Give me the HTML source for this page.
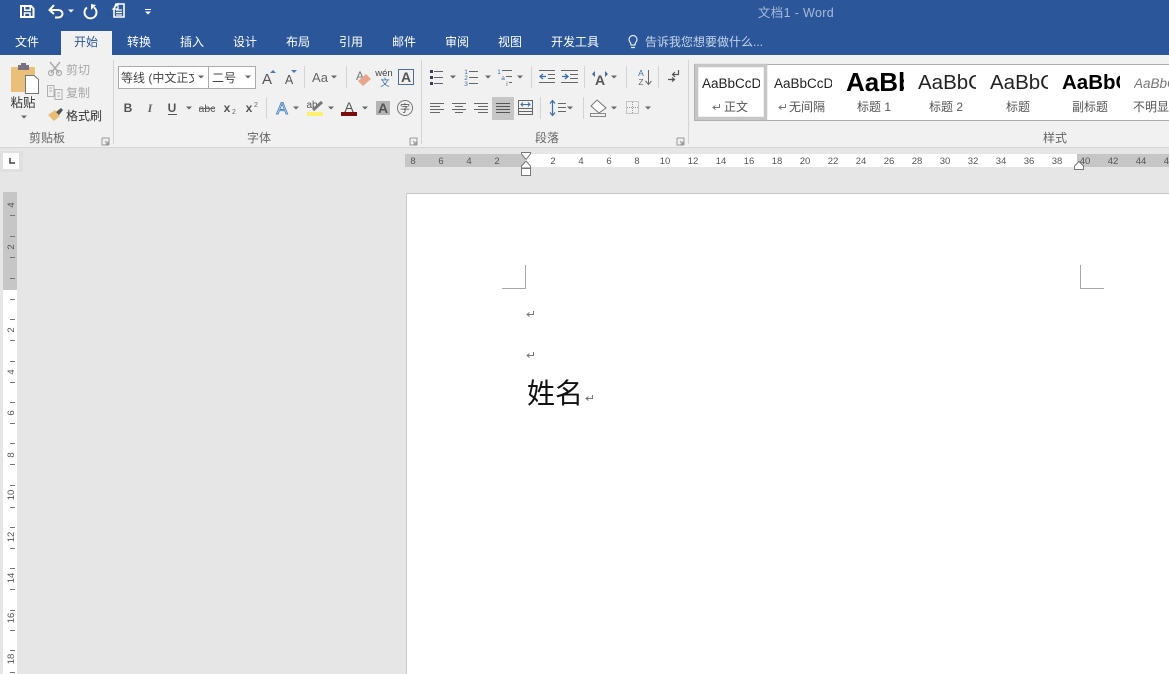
<!DOCTYPE html>
<html lang="zh"><head><meta charset="utf-8"><title>文档1 - Word</title>
<style>
html,body{margin:0;padding:0;width:1169px;height:674px;overflow:hidden;background:#e6e6e6}
svg{display:block;position:absolute;left:0;top:0}
text{font-family:"Liberation Sans","Noto Sans CJK SC",sans-serif}
.t{font-size:12px;fill:#fff;text-anchor:middle}
.l{font-size:12px;fill:#444}
.g{font-size:12px;fill:#666;text-anchor:middle}
.s{font-size:12px;fill:#555;text-anchor:middle}
.r{font-size:9.500px;fill:#555;text-anchor:middle}
.i{fill:none;stroke:#666;stroke-width:1}
</style></head><body>
<svg width="1169" height="674" viewBox="0 0 1169 674" xmlns="http://www.w3.org/2000/svg">
<defs>
<polygon id="a" points="-3,-1.500 3,-1.500 0,1.500" fill="#666"/>
<polygon id="w" points="-3,-1.500 3,-1.500 0,1.500" fill="#fff"/>
<path id="lau" d="M0,0H7V7M0,0V7H7M3,3L6,6M6,3.500V6H3.500" fill="none" stroke="#999" stroke-width="1"/>
<path id="ret" d="M7.500,0V3.500H1.500M3.500,1.500L1,3.500L3.500,5.500" fill="none" stroke="#777" stroke-width="1"/>
<clipPath id="c1"><rect x="120" y="66" width="74" height="22"/></clipPath>
</defs>

<!-- Chrome -->
<rect width="1169" height="55" fill="#2b579a"/>
<rect x="0" y="55" width="1169" height="93" fill="#f1f1f1"/>
<rect x="0" y="147" width="1169" height="1" fill="#d6d6d6"/>
<rect x="0" y="148" width="1169" height="526" fill="#e6e6e6"/>
<rect x="61" y="31" width="51" height="25" fill="#f1f1f1"/>

<!-- QAT -->
<path d="M21,6H31L33.500,8.500V17H21Z" fill="none" stroke="#fff" stroke-width="2"/>
<rect x="24" y="5" width="7" height="1.500" fill="#fff"/>
<rect x="24" y="9.500" width="7" height="1.500" fill="#fff"/>
<rect x="24" y="5" width="1.500" height="5" fill="#fff"/><rect x="29.500" y="5" width="1.500" height="5" fill="#fff"/>
<path d="M24.500,17V13H30V17" fill="none" stroke="#fff" stroke-width="1.500"/>
<path d="M50,10H58C64,10 64,17.500 58,17.500H55" fill="none" stroke="#fff" stroke-width="2"/>
<path d="M54,5L49.500,10L54,14" fill="none" stroke="#fff" stroke-width="2"/>
<use href="#w" x="71" y="11"/>
<path d="M87,7.500A6,6 0 1 0 94,7.500" fill="none" stroke="#fff" stroke-width="2"/>
<path d="M91,4V10L96,5Z" fill="#fff"/>
<path d="M116,4H124V17H114V9Z" fill="none" stroke="#fff" stroke-width="1.600"/>
<path d="M113,9L118,4L118,9ZM116,10H122M116,12.500H122M116,15H122" fill="none" stroke="#fff" stroke-width="1.200"/>
<rect x="145" y="9" width="6" height="1" fill="#fff"/><use href="#w" x="148" y="13"/>

<!-- Title & tabs -->
<text x="796" y="17" text-anchor="middle" font-size="12.500" fill="#a8bbd8" style="letter-spacing:.35px">文档1 - Word</text>
<text class="t" x="27" y="46">文件</text>
<text class="t" x="86" y="46" style="fill:#2b579a">开始</text>
<text class="t" x="139" y="46">转换</text>
<text class="t" x="192" y="46">插入</text>
<text class="t" x="245" y="46">设计</text>
<text class="t" x="298" y="46">布局</text>
<text class="t" x="351" y="46">引用</text>
<text class="t" x="404" y="46">邮件</text>
<text class="t" x="457" y="46">审阅</text>
<text class="t" x="510" y="46">视图</text>
<text class="t" x="575" y="46">开发工具</text>
<path d="M631,45C631,42 629,42 629,39.500A4,4 0 0 1 637,39.500C637,42 635,42 635,45ZM631,47.500H635" fill="none" stroke="#dfe8f4" stroke-width="1.200"/>
<text x="645" y="46" font-size="12" fill="#c6d3e7">告诉我您想要做什么...</text>

<!-- Clipboard -->
<rect x="11" y="67" width="24" height="25" rx="1" fill="#e9bf79"/>
<rect x="18" y="65" width="11" height="5" fill="#7c7080"/><rect x="21" y="63" width="5" height="3" fill="#7c7080"/>
<path d="M25.500,75.500H34L38.500,79.500V93.500H25.500Z" fill="#fff" stroke="#777"/>
<text x="23" y="107" text-anchor="middle" font-size="12.500" fill="#333">粘贴</text>
<use href="#a" x="24" y="117"/>
<path d="M50,62L59,73M60,62L51,73" stroke="#aaa" stroke-width="1.500" fill="none"/>
<circle cx="51" cy="73" r="2.500" fill="none" stroke="#aaa" stroke-width="1.200"/><circle cx="59" cy="73" r="2.500" fill="none" stroke="#aaa" stroke-width="1.200"/>
<text x="66" y="74" font-size="12" fill="#a8a8a8">剪切</text>
<path d="M47.500,85.500H54V96.500H47.500ZM55,89.500H62V99.500H55ZM49,88H52M49,91H52M57,93H60M57,96H60" fill="none" stroke="#b0b0b0"/>
<text x="66" y="97" font-size="12" fill="#a8a8a8">复制</text>
<path d="M48,115L55,110L60,116L54,121Z" fill="#e8bd75"/><path d="M56,112L61,108L63,110L59,115Z" fill="#555"/>
<text x="66" y="120" font-size="12" fill="#333">格式刷</text>
<text class="g" x="47" y="142">剪贴板</text>
<use href="#lau" x="102" y="138"/>
<rect x="113" y="60" width="1" height="84" fill="#d4d4d4"/>

<!-- Font group -->
<rect x="118.500" y="66.500" width="90" height="22" fill="#fff" stroke="#ababab"/>
<rect x="208.500" y="66.500" width="47" height="22" fill="#fff" stroke="#ababab"/>
<text x="121" y="82" font-size="12" fill="#444" clip-path="url(#c1)">等线 (中文正文)</text>
<use href="#a" x="201" y="77"/>
<text x="212" y="82" font-size="12" fill="#444">二号</text>
<use href="#a" x="248" y="77"/>
<text x="267" y="84" text-anchor="middle" font-size="15" fill="#555">A</text><polygon points="270,73 273,70 276,73" fill="#4a7ab0"/>
<text x="289" y="84" text-anchor="middle" font-size="12.500" fill="#555">A</text><polygon points="291,70 297,70 294,73" fill="#4a7ab0"/>
<rect x="304" y="66" width="1" height="22" fill="#d4d4d4"/>
<text x="320" y="82" text-anchor="middle" font-size="13" fill="#666">Aa</text><use href="#a" x="334" y="77"/>
<rect x="346" y="66" width="1" height="22" fill="#d4d4d4"/>
<text x="360" y="80" text-anchor="middle" font-size="12" fill="#777">A</text>
<path d="M358,81L366,74L371,79L363,86Z" fill="#e8a58c"/>
<text x="384" y="76" text-anchor="middle" font-size="9.500" fill="#444">wén</text>
<text x="385" y="86" text-anchor="middle" font-size="9.500" fill="#3a6ea5">文</text>
<rect x="398.500" y="69.500" width="15" height="15" fill="none" stroke="#4d6d91"/>
<text x="406" y="82" text-anchor="middle" font-size="14" font-weight="bold" fill="#555">A</text>

<text x="128" y="112" text-anchor="middle" font-size="12" font-weight="bold" fill="#555">B</text>
<text x="150" y="112" text-anchor="middle" font-size="12" font-style="italic" font-weight="bold" fill="#666" style="font-family:'Liberation Serif',serif">I</text>
<text x="172" y="112" text-anchor="middle" font-size="12" font-weight="bold" fill="#555">U</text><rect x="168" y="114" width="9" height="1" fill="#555"/>
<use href="#a" x="189" y="108"/>
<text x="207" y="112" text-anchor="middle" font-size="10.500" fill="#555">abc</text><rect x="199" y="108" width="16" height="1" fill="#666"/>
<text x="227" y="112" text-anchor="middle" font-size="12" font-weight="bold" fill="#555">x</text><text x="234" y="114" text-anchor="middle" font-size="7" fill="#666">2</text>
<text x="249" y="112" text-anchor="middle" font-size="12" font-weight="bold" fill="#555">x</text><text x="256" y="107" text-anchor="middle" font-size="7" fill="#666">2</text>
<rect x="266" y="97" width="1" height="22" fill="#d4d4d4"/>
<text x="282" y="114" text-anchor="middle" font-size="17" fill="#dcebf8" stroke="#4f86c0" stroke-width=".9">A</text><use href="#a" x="296" y="108"/>
<text x="312" y="108" text-anchor="middle" font-size="10" fill="#555">ab</text>
<path d="M313,110L322,102" stroke="#777" stroke-width="3"/>
<rect x="307" y="112" width="16" height="4" fill="#fcef6e"/><use href="#a" x="331" y="108"/>
<text x="349" y="112" text-anchor="middle" font-size="14" fill="#555">A</text>
<rect x="341" y="112" width="16" height="4" fill="#7a0c0c"/><use href="#a" x="365" y="108"/>
<rect x="376" y="101" width="14" height="14" fill="#b4b4b4"/>
<text x="383" y="113" text-anchor="middle" font-size="14" font-weight="bold" fill="#555">A</text>
<circle cx="405" cy="108" r="7.500" fill="none" stroke="#777"/>
<text x="405" y="112" text-anchor="middle" font-size="10" fill="#444">字</text>
<text class="g" x="259" y="142">字体</text>
<use href="#lau" x="410" y="138"/>
<rect x="421" y="60" width="1" height="84" fill="#d4d4d4"/>

<!-- Paragraph row 1 -->
<path d="M434,71.500H443M434,77.500H443M434,83.500H443" class="i"/>
<path d="M430,70h3v3h-3zM430,76h3v3h-3zM430,82h3v3h-3z" fill="#3a3a5a"/>
<use href="#a" x="453" y="77"/>
<path d="M469,71.500H478M469,77.500H478M469,83.500H478" class="i"/>
<text x="466" y="74" text-anchor="middle" font-size="6.500" fill="#3f6ea3">1</text><text x="466" y="80" text-anchor="middle" font-size="6.500" fill="#3f6ea3">2</text><text x="466" y="86" text-anchor="middle" font-size="6.500" fill="#3f6ea3">3</text>
<use href="#a" x="488" y="77"/>
<path d="M502,70.500H512M506,76.500H512M509,82.500H512" class="i"/>
<text x="499" y="74" text-anchor="middle" font-size="6.500" fill="#3f6ea3">1</text><text x="503" y="80" text-anchor="middle" font-size="6.500" fill="#3f6ea3">a</text><text x="507" y="86" text-anchor="middle" font-size="6.500" fill="#666">i</text>
<use href="#a" x="520" y="77"/>
<rect x="531" y="66" width="1" height="22" fill="#d4d4d4"/>
<path d="M539,70.500H555M548,74.500H555M548,78.500H555M539,82.500H555" class="i"/><path d="M546,76.500H540M543,74L540,76.500L543,79" stroke="#3f6ea3" stroke-width="1.300" fill="none"/>
<path d="M561,70.500H578M570,74.500H578M570,78.500H578M561,82.500H578" class="i"/><path d="M562,76.500H568M565,74L568,76.500L565,79" stroke="#3f6ea3" stroke-width="1.300" fill="none"/>
<rect x="584" y="66" width="1" height="22" fill="#d4d4d4"/>
<text x="600" y="85" text-anchor="middle" font-size="14" font-weight="bold" fill="#555">A</text>
<path d="M592,74L595,71V77ZM608,74L605,71V77Z" fill="#3f6ea3"/>
<use href="#a" x="614" y="77"/>
<rect x="626" y="66" width="1" height="22" fill="#d4d4d4"/>
<text x="641" y="76" text-anchor="middle" font-size="8.500" fill="#3f6ea3">A</text><text x="641" y="85" text-anchor="middle" font-size="8.500" fill="#666">Z</text>
<path d="M648.500,70V84M645.500,81L648.500,84.500L651.500,81" class="i"/>
<rect x="658" y="66" width="1" height="22" fill="#d4d4d4"/>
<path d="M678.500,70V74.500H673M675,72L672.500,74.500L675,77" fill="none" stroke="#555" stroke-width="1.200"/>
<path d="M668,79.500H674M672,77.500L674.500,79.500L672,81.500" fill="none" stroke="#555" stroke-width="1.200"/>

<!-- Paragraph row 2 -->
<path d="M430,103.500H444M430,106.500H440M430,109.500H444M430,112.500H440" class="i"/>
<path d="M452,103.500H466M455,106.500H463M452,109.500H466M455,112.500H463" class="i"/>
<path d="M474,103.500H488M478,106.500H488M474,109.500H488M478,112.500H488" class="i"/>
<rect x="492" y="97" width="22" height="23" fill="#c6c6c6"/>
<path d="M496,103.500H510M496,106.500H510M496,109.500H510M496,112.500H510" stroke="#555" fill="none"/>
<path d="M518,100.500H533M518,111.500H533M518,114.500H533M518,108.500H533" stroke="#666" fill="none"/>
<path d="M518.500,100V115M532.500,100V115" stroke="#666" fill="none"/>
<path d="M521,104.500H530M523,102.500L521,104.500L523,106.500M528,102.500L530,104.500L528,106.500" stroke="#3f6ea3" fill="none"/>
<rect x="540" y="97" width="1" height="22" fill="#d4d4d4"/>
<path d="M552.500,101V115M550,103.500L552.500,100.500L555,103.500M550,112.500L552.500,115.500L555,112.500" stroke="#3f6ea3" stroke-width="1.200" fill="none"/>
<path d="M558,103.500H566M558,107.500H566M558,111.500H566" class="i"/>
<use href="#a" x="570" y="108"/>
<rect x="583" y="97" width="1" height="22" fill="#d4d4d4"/>
<path d="M597,100L606,108L599,113L591,106Z" fill="#fff" stroke="#777"/>
<rect x="590.500" y="113.500" width="15" height="3" fill="#f1f1f1" stroke="#888"/>
<use href="#a" x="614" y="108"/>
<rect x="626.500" y="101.500" width="12" height="12" fill="none" stroke="#999" stroke-dasharray="1 1"/>
<path d="M632.500,102V113M627,107.500H638" stroke="#999" stroke-dasharray="1 1"/>
<use href="#a" x="648" y="108"/>
<text class="g" x="547" y="142">段落</text>
<use href="#lau" x="677" y="138"/>
<rect x="688" y="60" width="1" height="84" fill="#d4d4d4"/>

<!-- Styles gallery -->
<rect x="694.500" y="64.500" width="480" height="56" fill="#fff" stroke="#ababab"/>
<rect x="696.500" y="65.500" width="69" height="53" fill="#fff" stroke="#c6c6c6" stroke-width="3.500"/>
<svg x="702" y="70" width="58" height="24"><text x="0" y="18" font-size="13.500" fill="#222">AaBbCcDd</text></svg>
<svg x="774" y="70" width="58" height="24"><text x="0" y="18" font-size="13.500" fill="#222">AaBbCcDd</text></svg>
<svg x="846" y="64" width="58" height="30"><text x="0" y="27" font-size="26" font-weight="bold" fill="#000">AaBb</text></svg>
<svg x="918" y="68" width="58" height="26"><text x="0" y="21" font-size="20.500" fill="#222">AaBbC</text></svg>
<svg x="990" y="68" width="58" height="26"><text x="0" y="21" font-size="20.500" fill="#222">AaBbC</text></svg>
<svg x="1062" y="68" width="58" height="26"><text x="0" y="21" font-size="20.500" font-weight="bold" fill="#000">AaBbC</text></svg>
<svg x="1134" y="70" width="35" height="24"><text x="0" y="18" font-size="13.500" font-style="italic" fill="#777">AaBbCcDd</text></svg>
<use href="#ret" x="712" y="104"/>
<text class="s" x="736" y="111">正文</text>
<use href="#ret" x="778" y="104"/>
<text class="s" x="807" y="111">无间隔</text>
<text class="s" x="874" y="111">标题 1</text>
<text class="s" x="946" y="111">标题 2</text>
<text class="s" x="1018" y="111">标题</text>
<text class="s" x="1090" y="111">副标题</text>
<text class="s" x="1151" y="111">不明显</text>
<text class="g" x="1055" y="142">样式</text>

<!-- Tab selector -->
<rect x="0" y="151" width="23" height="21" fill="#e0e0e0"/>
<rect x="3" y="153" width="16" height="16" fill="#fdfdfd"/>
<path d="M10,158V163H15" fill="none" stroke="#444" stroke-width="1.500"/>

<!-- Horizontal ruler -->
<rect x="405" y="154" width="764" height="13" fill="#c6c6c6"/>
<rect x="525" y="154" width="552" height="13" fill="#fff"/>
<g>
<text class="r" x="413" y="164">8</text><text class="r" x="441" y="164">6</text><text class="r" x="469" y="164">4</text><text class="r" x="497" y="164">2</text>
<text class="r" x="553" y="164">2</text><text class="r" x="581" y="164">4</text><text class="r" x="609" y="164">6</text><text class="r" x="637" y="164">8</text>
<text class="r" x="665" y="164">10</text><text class="r" x="693" y="164">12</text><text class="r" x="721" y="164">14</text><text class="r" x="749" y="164">16</text>
<text class="r" x="777" y="164">18</text><text class="r" x="805" y="164">20</text><text class="r" x="833" y="164">22</text><text class="r" x="861" y="164">24</text>
<text class="r" x="889" y="164">26</text><text class="r" x="917" y="164">28</text><text class="r" x="945" y="164">30</text><text class="r" x="973" y="164">32</text>
<text class="r" x="1001" y="164">34</text><text class="r" x="1029" y="164">36</text><text class="r" x="1057" y="164">38</text><text class="r" x="1085" y="164">40</text>
<text class="r" x="1113" y="164">42</text><text class="r" x="1141" y="164">44</text><text class="r" x="1169" y="164">46</text>
</g>
<path d="M521.500,152.500H530.500V154L526,159.500L521.500,154Z" fill="#fff" stroke="#777"/>
<path d="M526,161L530.500,166V168H521.500V166Z" fill="#fff" stroke="#777"/>
<rect x="521.500" y="168.500" width="9" height="7" fill="#fff" stroke="#777"/>
<path d="M1079,161.500L1083.500,166V169.500H1074.500V166Z" fill="#fff" stroke="#777"/>

<!-- Vertical ruler -->
<rect x="3" y="192" width="14" height="482" fill="#fff"/>
<rect x="3" y="192" width="14" height="98" fill="#c6c6c6"/>
<path d="M10,215.500H15M10,236.500H15M10,257.500H15M10,278.500H15M10,299.500H15M10,319.500H15M10,340.500H15M10,361.500H15M10,382.500H15M10,402.500H15M10,423.500H15M10,443.500H15M10,464.500H15M10,485.500H15M10,507.500H15M10,527.500H15M10,548.500H15M10,568.500H15M10,589.500H15M10,610.500H15M10,630.500H15M10,650.500H15M10,672.500H15" stroke="#777" fill="none"/>
<g>
<text class="r" transform="translate(14,205) rotate(-90)">4</text>
<text class="r" transform="translate(14,247) rotate(-90)">2</text>
<text class="r" transform="translate(14,330) rotate(-90)">2</text>
<text class="r" transform="translate(14,372) rotate(-90)">4</text>
<text class="r" transform="translate(14,413) rotate(-90)">6</text>
<text class="r" transform="translate(14,455) rotate(-90)">8</text>
<text class="r" transform="translate(14,495) rotate(-90)">10</text>
<text class="r" transform="translate(14,537) rotate(-90)">12</text>
<text class="r" transform="translate(14,578) rotate(-90)">14</text>
<text class="r" transform="translate(14,618) rotate(-90)">16</text>
<text class="r" transform="translate(14,659) rotate(-90)">18</text>
</g>

<!-- Page -->
<rect x="406" y="193" width="763" height="481" fill="#c8c8c8"/>
<rect x="407" y="194" width="762" height="480" fill="#fff"/>
<path d="M502,288.500H525.500V265M1104,288.500H1080.500V265" fill="none" stroke="#a8a8a8"/>
<use href="#ret" x="526" y="311"/>
<use href="#ret" x="526" y="352"/>
<use href="#ret" x="585" y="395"/>
<text x="527" y="403" font-size="28" fill="#111">姓名</text>
</svg>
</body></html>
